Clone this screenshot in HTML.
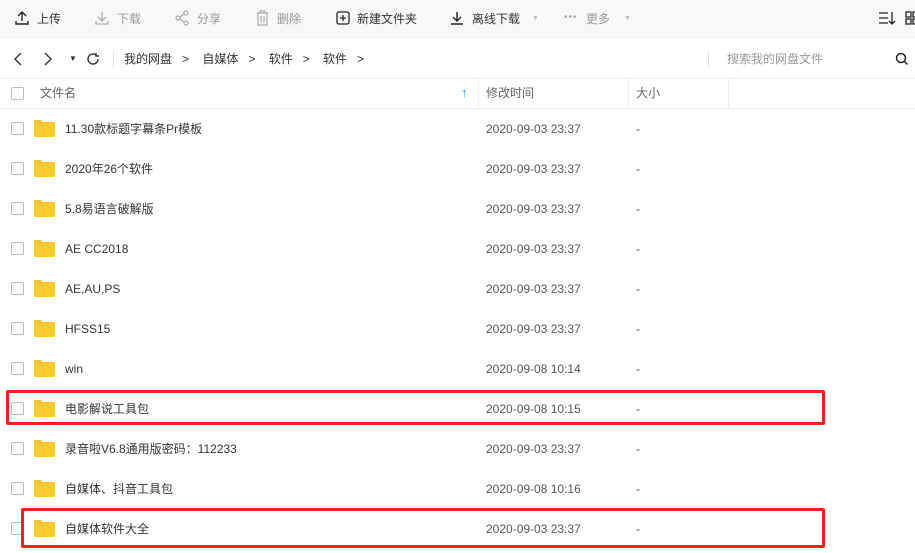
<!DOCTYPE html>
<html><head><meta charset="utf-8"><style>
*{margin:0;padding:0;box-sizing:border-box}
body{width:915px;height:553px;overflow:hidden;background:#fff;font-family:"Liberation Sans","Noto Sans CJK SC",sans-serif;font-size:12px;line-height:1;color:#424e67;position:relative}
.abs{position:absolute;white-space:nowrap;line-height:1}
.tb{position:absolute;left:0;top:0;width:915px;height:38px;background:#f7f8fa;border-bottom:1px solid #eceef2}
.tbi{position:absolute;top:13px;font-size:12px;color:#333;line-height:1}
.dis{color:#999}
.hd{position:absolute;left:0;top:78px;width:915px;height:31px;border-top:1px solid #eceef2;border-bottom:1px solid #eceef2}
.cb{position:absolute;width:13px;height:13px;border:1px solid #bbb;border-radius:2px;background:#fff}
.fold{position:absolute;width:21px;height:18px}
.row{position:absolute;left:0;width:915px;height:40px}
.red{position:absolute;border:3px solid #f0231c;border-radius:2px}
</style></head><body>
<div class="tb">
 <svg class="abs" style="left:15px;top:11px" width="14" height="14" viewBox="0 0 14 14" fill="none" stroke="#222" stroke-width="1.4"><path d="M7 10V1M3 5l4-4 4 4M1 10v3h12v-3"/></svg>
 <span class="tbi" style="left:37px">上传</span>
 <svg class="abs" style="left:95px;top:11px" width="14" height="14" viewBox="0 0 14 14" fill="none" stroke="#aaa" stroke-width="1.3"><path d="M7 1v9M3 6l4 4 4-4M1 10v3h12v-3"/></svg>
 <span class="tbi dis" style="left:117px">下载</span>
 <svg class="abs" style="left:175px;top:10px" width="15" height="16" viewBox="0 0 15 16" fill="none" stroke="#aaa" stroke-width="1.2"><circle cx="11" cy="3" r="2"/><circle cx="3" cy="8" r="2"/><circle cx="11" cy="13" r="2"/><path d="M5 7l4-3M5 9l4 3"/></svg>
 <span class="tbi dis" style="left:197px">分享</span>
 <svg class="abs" style="left:256px;top:10px" width="13" height="16" viewBox="0 0 13 16" fill="none" stroke="#aaa" stroke-width="1.2"><path d="M1 3h11M4 3V1h5v2M2 3v12h9V3M5 6v6M8 6v6"/></svg>
 <span class="tbi dis" style="left:277px">删除</span>
 <svg class="abs" style="left:336px;top:11px" width="14" height="14" viewBox="0 0 14 14" fill="none" stroke="#222" stroke-width="1.3"><rect x="1" y="1" width="12" height="12" rx="2"/><path d="M7 4v6M4 7h6"/></svg>
 <span class="tbi" style="left:357px">新建文件夹</span>
 <svg class="abs" style="left:450px;top:11px" width="14" height="14" viewBox="0 0 14 14" fill="none" stroke="#222" stroke-width="1.4"><path d="M7 1v9M3 6l4 4 4-4M1 13h12"/></svg>
 <span class="tbi" style="left:472px">离线下载</span>
 <span class="abs" style="left:532px;top:15px;color:#bbb;font-size:7px">▼</span>
 <span class="abs" style="left:564px;top:13px;color:#aaa;font-size:10px;letter-spacing:1px">•••</span>
 <span class="tbi dis" style="left:586px">更多</span>
 <span class="abs" style="left:624px;top:15px;color:#bbb;font-size:7px">▼</span>
 <svg class="abs" style="left:878px;top:11px" width="18" height="15" viewBox="0 0 18 15" fill="none" stroke="#222" stroke-width="1.3"><path d="M1 2h9M1 7h9M1 12h9M14 1v12M11 10l3 3 3-3"/></svg>
 <svg class="abs" style="left:905px;top:11px" width="12" height="14" viewBox="0 0 12 14" fill="none" stroke="#222" stroke-width="1.3"><rect x="1" y="1" width="5" height="5"/><rect x="1" y="8" width="5" height="5"/><rect x="8" y="1" width="5" height="5"/><rect x="8" y="8" width="5" height="5"/></svg>
</div>
<svg class="abs" style="left:13px;top:52px" width="10" height="14" viewBox="0 0 10 14" fill="none" stroke="#333" stroke-width="1.4"><path d="M8 1L2 7l6 6"/></svg>
<svg class="abs" style="left:43px;top:52px" width="10" height="14" viewBox="0 0 10 14" fill="none" stroke="#333" stroke-width="1.4"><path d="M2 1l6 6-6 6"/></svg>
<span class="abs" style="left:69px;top:55px;font-size:8px;color:#333">▼</span>
<svg class="abs" style="left:86px;top:52px" width="14" height="14" viewBox="0 0 14 14" fill="none" stroke="#333" stroke-width="1.4"><path d="M12 7a5 5 0 1 1-2-4M10 1v3h3"/></svg>
<div class="abs" style="left:113px;top:50px;width:1px;height:18px;background:#e2e4e8"></div>
<span class="abs" style="left:124px;top:53px;color:#333">我的网盘 &nbsp;&nbsp;&gt;&nbsp;&nbsp;&nbsp; 自媒体 &nbsp;&nbsp;&gt;&nbsp;&nbsp;&nbsp; 软件 &nbsp;&nbsp;&gt;&nbsp;&nbsp;&nbsp; 软件 &nbsp;&nbsp;&gt;</span>
<div class="abs" style="left:708px;top:50px;width:1px;height:18px;background:#e2e4e8"></div>
<span class="abs" style="left:727px;top:53px;color:#999">搜索我的网盘文件</span>
<svg class="abs" style="left:895px;top:52px" width="14" height="14" viewBox="0 0 14 14" fill="none" stroke="#222" stroke-width="1.5"><circle cx="6" cy="6" r="4.5"/><path d="M9.5 9.5l3 3"/></svg>
<div class="hd">
 <div class="cb" style="left:11px;top:8px"></div>
 <span class="abs" style="left:40px;top:8px;color:#666">文件名</span>
 <span class="abs" style="left:461px;top:7px;color:#09aaff;font-size:13px;font-weight:bold">↑</span>
 <div class="abs" style="left:478px;top:0;width:1px;height:30px;background:#eceef2"></div>
 <span class="abs" style="left:486px;top:8px;color:#666">修改时间</span>
 <div class="abs" style="left:628px;top:0;width:1px;height:30px;background:#eceef2"></div>
 <span class="abs" style="left:636px;top:8px;color:#666">大小</span>
 <div class="abs" style="left:728px;top:0;width:1px;height:30px;background:#eceef2"></div>
</div>
<div id="rows"></div>
<script>
var d=[["11.30款标题字幕条Pr模板","2020-09-03 23:37"],["2020年26个软件","2020-09-03 23:37"],["5.8易语言破解版","2020-09-03 23:37"],["AE CC2018","2020-09-03 23:37"],["AE,AU,PS","2020-09-03 23:37"],["HFSS15","2020-09-03 23:37"],["win","2020-09-08 10:14"],["电影解说工具包","2020-09-08 10:15"],["录音啦V6.8通用版密码：112233","2020-09-03 23:37"],["自媒体、抖音工具包","2020-09-08 10:16"],["自媒体软件大全","2020-09-03 23:37"]];
var h="";
d.forEach(function(r,i){var t=109+40*i;
h+='<div class="row" style="top:'+t+'px"><div class="cb" style="left:11px;top:13px"></div>'+
'<svg class="fold" style="left:34px;top:10px" viewBox="0 0 21 18"><path d="M0 2a1 1 0 0 1 1-1h6l2 2h11a1 1 0 0 1 1 1v13a1 1 0 0 1-1 1H1a1 1 0 0 1-1-1z" fill="#f7c331"/><path d="M0 4h21v13a1 1 0 0 1-1 1H1a1 1 0 0 1-1-1z" fill="#f9cb2f"/></svg>'+
'<span class="abs" style="left:65px;top:14px;color:#333;font-size:12px">'+r[0]+'</span>'+
'<span class="abs" style="left:486px;top:14px;color:#555">'+r[1]+'</span>'+
'<span class="abs" style="left:636px;top:14px;color:#555">-</span></div>';});
document.getElementById("rows").innerHTML=h;
</script>
<div class="red" style="left:6px;top:390px;width:819px;height:35px"></div>
<div class="red" style="left:21px;top:508px;width:804px;height:40px"></div>
</body></html>
